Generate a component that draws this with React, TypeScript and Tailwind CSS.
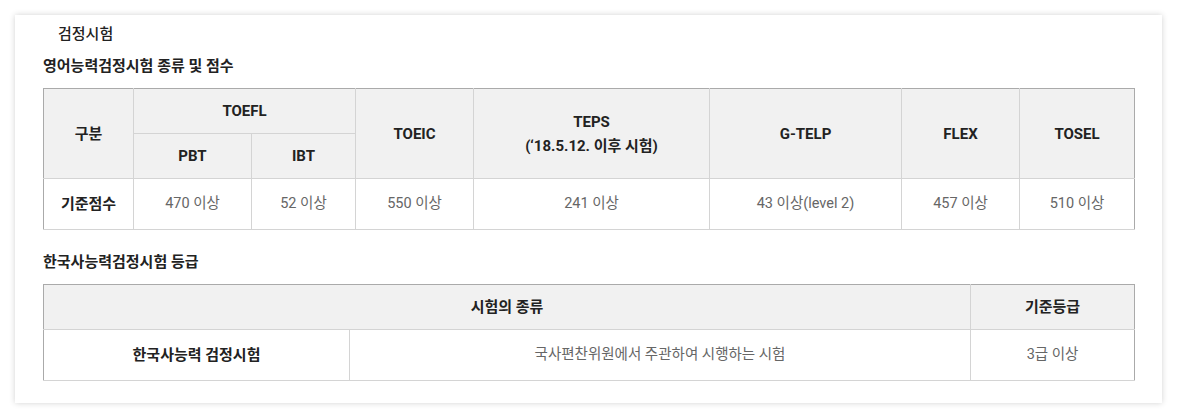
const th = "border border-[#d4d4d4] bg-[#f1f1f1] font-bold text-[15px] text-[#222] text-center align-middle leading-6";
const td = "border border-[#d4d4d4] text-[14.5px] text-[#666] text-center align-middle";

const scores = ["470 이상", "52 이상", "550 이상", "241 이상", "43 이상(level 2)", "457 이상", "510 이상"];

export default function App() {
  return (
    <div className="w-[1177px] h-[419px] bg-white p-[15px] text-[14px]" style={{ fontFamily: 'Roboto, "Noto Sans CJK KR", sans-serif' }}>
      <div className="w-[1147px] h-[388px] bg-white shadow-[0_0_6px_rgba(0,0,0,0.18)] px-[28px] pt-[9px]">
        <h2 className="pl-[15px] text-[15px] font-medium text-[#222] leading-5">검정시험</h2>
        <h3 className="mt-[12px] text-[15px] font-bold text-[#222] leading-5">영어능력검정시험 종류 및 점수</h3>
        <table className="mt-[12px] w-[1091px] border-collapse table-fixed">
          <colgroup>
            <col className="w-[90px]" />
            <col className="w-[118px]" />
            <col className="w-[104px]" />
            <col className="w-[118px]" />
            <col className="w-[236px]" />
            <col className="w-[192px]" />
            <col className="w-[118px]" />
            <col className="w-[115px]" />
          </colgroup>
          <thead>
            <tr className="h-[45px]">
              <th rowSpan={2} className={`${th} border-t-[#aaa] border-l-[#aaa]`}>구분</th>
              <th colSpan={2} className={`${th} border-t-[#aaa]`}>TOEFL</th>
              <th rowSpan={2} className={`${th} border-t-[#aaa]`}>TOEIC</th>
              <th rowSpan={2} className={`${th} border-t-[#aaa]`}>
                TEPS
                <br />
                (‘18.5.12. 이후 시험)
              </th>
              <th rowSpan={2} className={`${th} border-t-[#aaa]`}>G-TELP</th>
              <th rowSpan={2} className={`${th} border-t-[#aaa]`}>FLEX</th>
              <th rowSpan={2} className={`${th} border-t-[#aaa] border-r-[#aaa]`}>TOSEL</th>
            </tr>
            <tr className="h-[45px]">
              <th className={th}>PBT</th>
              <th className={th}>IBT</th>
            </tr>
          </thead>
          <tbody>
            <tr className="h-[51px]">
              <th className={`${td} font-bold !text-[15px] !text-[#222] border-l-[#aaa]`}>기준점수</th>
              {scores.map((s, i) => (
                <td key={s} className={`${td} ${i === scores.length - 1 ? "border-r-[#aaa]" : ""}`}>{s}</td>
              ))}
            </tr>
          </tbody>
        </table>

        <h3 className="mt-[22px] text-[15px] font-bold text-[#222] leading-5">한국사능력검정시험 등급</h3>
        <table className="mt-[12px] w-[1091px] border-collapse table-fixed">
          <colgroup>
            <col className="w-[306px]" />
            <col className="w-[621px]" />
            <col className="w-[164px]" />
          </colgroup>
          <thead>
            <tr className="h-[45px]">
              <th colSpan={2} className={`${th} border-t-[#aaa] border-l-[#aaa]`}>시험의 종류</th>
              <th className={`${th} border-t-[#aaa] border-r-[#aaa]`}>기준등급</th>
            </tr>
          </thead>
          <tbody>
            <tr className="h-[51px]">
              <th className={`${td} font-bold !text-[15px] !text-[#222] border-l-[#aaa]`}>한국사능력 검정시험</th>
              <td className={td}>국사편찬위원에서 주관하여 시행하는 시험</td>
              <td className={`${td} border-r-[#aaa]`}>3급 이상</td>
            </tr>
          </tbody>
        </table>
      </div>
    </div>
  );
}
